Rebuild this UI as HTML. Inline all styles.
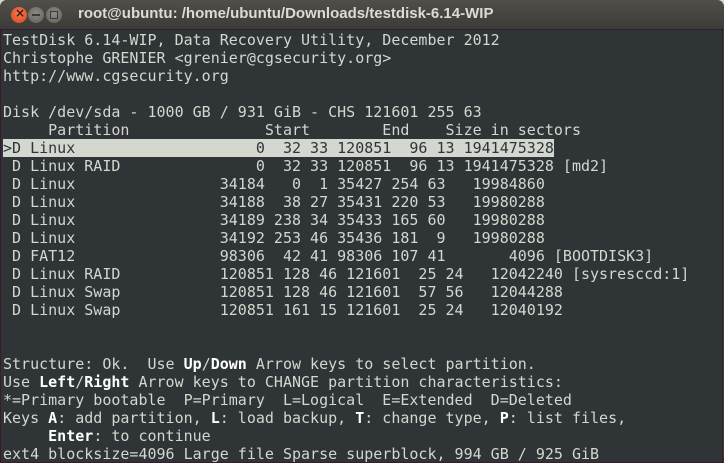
<!DOCTYPE html>
<html><head><meta charset="utf-8"><style>
html,body{margin:0;padding:0;width:724px;height:463px;overflow:hidden;background:#d6d4d0;}
.win{position:absolute;left:0;top:0;width:724px;height:463px;border-radius:7px 7px 0 0;overflow:hidden;background:#3c3b37;}
.tb{position:absolute;left:0;top:0;width:724px;height:29px;background:linear-gradient(#504f4a,#3c3b37);}
.title{position:absolute;left:78px;top:5px;font:bold 15px "Liberation Sans",sans-serif;color:#dfdbd2;white-space:nowrap;}
.btn{position:absolute;top:7px;width:16px;height:16px;border-radius:50%;}
.term{position:absolute;left:0;top:29px;width:721px;height:432px;background:#2f3436;border:1px solid #3a1a30;border-top:1px solid #3a1a30;}
pre{position:absolute;left:2px;top:1px;margin:0;font:15px/18px "DejaVu Sans Mono","Liberation Mono",monospace;color:#d3d7cf;}
b{color:#fff;}
.hl{background:#d3d7cf;color:#2f3436;}
</style></head><body><div class="win">
<div class="tb"></div>
<div class="btn" style="left:11px;background:radial-gradient(circle at 50% 40%,#f37b4e,#d9461d);"><span style="position:absolute;left:4px;top:-1px;font:bold 12px 'DejaVu Sans',sans-serif;color:#3a1a10">×</span></div>
<div class="btn" style="left:28px;background:radial-gradient(circle at 50% 40%,#8d8b85,#5f5e59);"><span style="position:absolute;left:4px;top:7px;width:8px;height:2px;background:#3c3b37"></span></div>
<div class="btn" style="left:46px;background:radial-gradient(circle at 50% 40%,#8d8b85,#5f5e59);"><span style="position:absolute;left:4px;top:4px;width:6px;height:6px;border:1px solid #3c3b37"></span></div>
<div class="title">root@ubuntu: /home/ubuntu/Downloads/testdisk-6.14-WIP</div>
<div class="term"><pre>TestDisk 6.14-WIP, Data Recovery Utility, December 2012
Christophe GRENIER &lt;grenier@cgsecurity.org&gt;
http://www.cgsecurity.org

Disk /dev/sda - 1000 GB / 931 GiB - CHS 121601 255 63
     Partition               Start        End    Size in sectors
<span class="hl">&gt;D Linux                    0  32 33 120851  96 13 1941475328</span>
 D Linux RAID               0  32 33 120851  96 13 1941475328 [md2]
 D Linux                34184   0  1 35427 254 63   19984860
 D Linux                34188  38 27 35431 220 53   19980288
 D Linux                34189 238 34 35433 165 60   19980288
 D Linux                34192 253 46 35436 181  9   19980288
 D FAT12                98306  42 41 98306 107 41       4096 [BOOTDISK3]
 D Linux RAID           120851 128 46 121601  25 24   12042240 [sysresccd:1]
 D Linux Swap           120851 128 46 121601  57 56   12044288
 D Linux Swap           120851 161 15 121601  25 24   12040192


Structure: Ok.  Use <b>Up</b>/<b>Down</b> Arrow keys to select partition.
Use <b>Left</b>/<b>Right</b> Arrow keys to CHANGE partition characteristics:
*=Primary bootable  P=Primary  L=Logical  E=Extended  D=Deleted
Keys <b>A</b>: add partition, <b>L</b>: load backup, <b>T</b>: change type, <b>P</b>: list files,
     <b>Enter</b>: to continue
ext4 blocksize=4096 Large file Sparse superblock, 994 GB / 925 GiB</pre></div>
</div></body></html>
